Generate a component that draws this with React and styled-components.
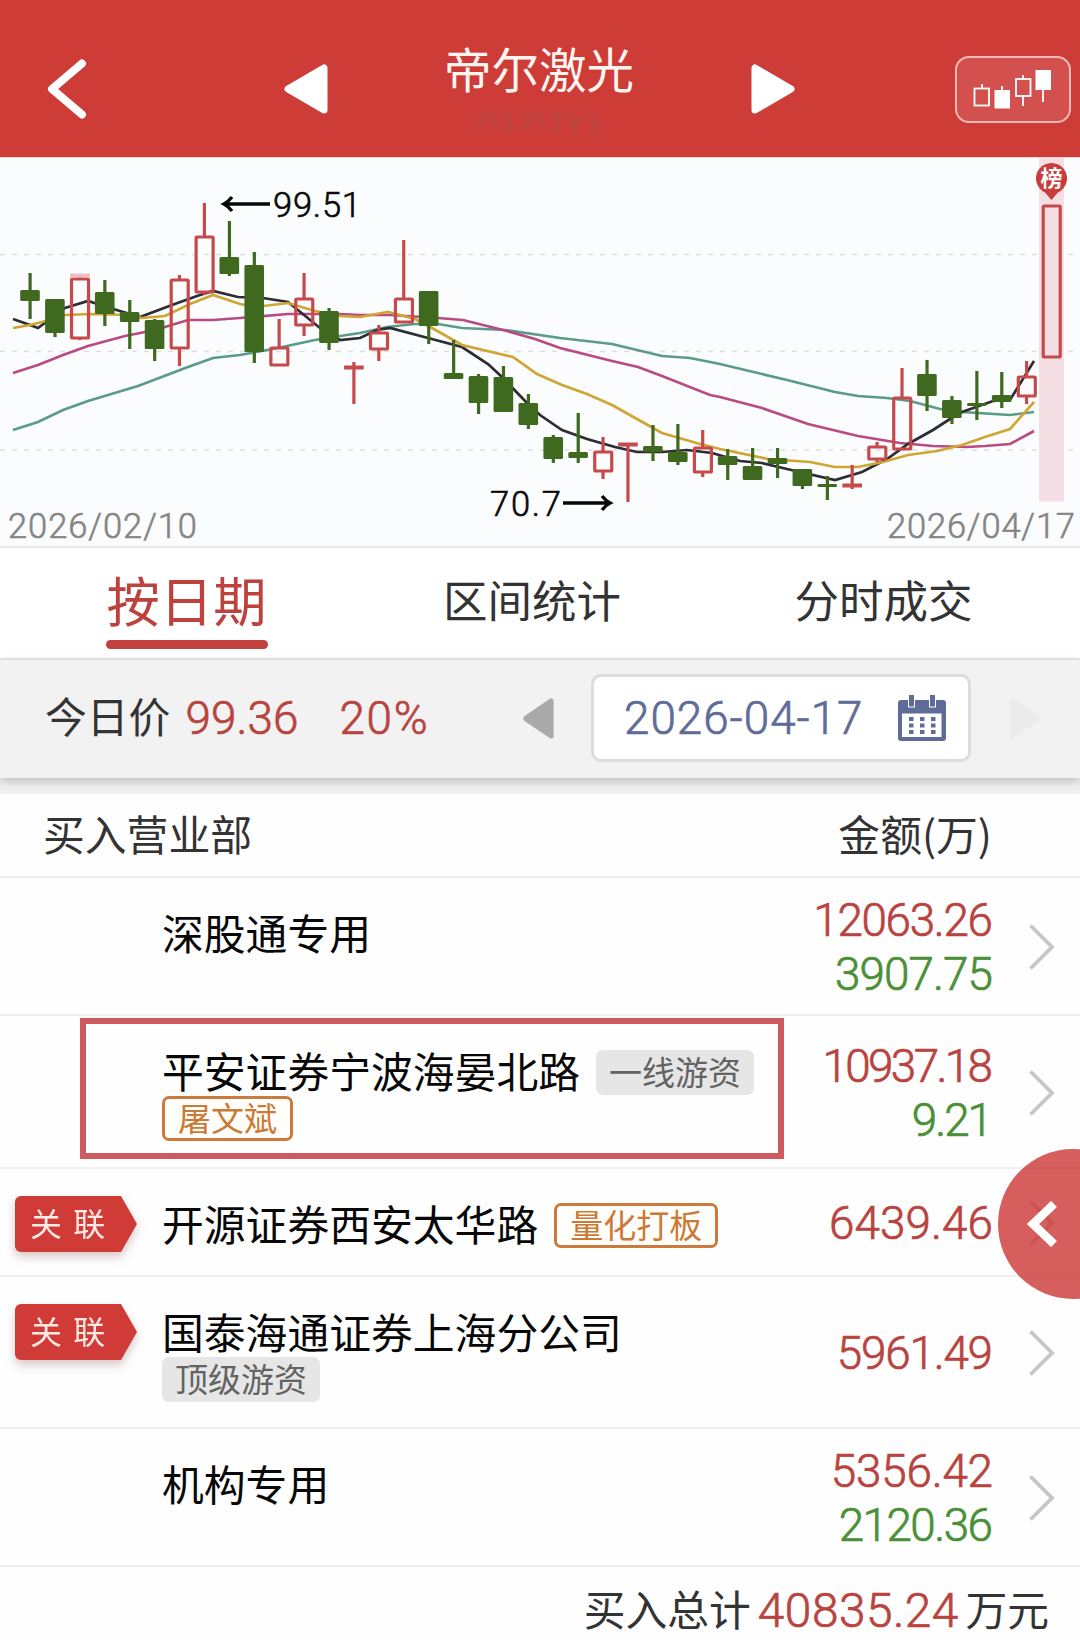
import React from 'react'
import styled, { createGlobalStyle } from 'styled-components'

const GlobalStyle = createGlobalStyle`
    body {
        margin: 0;
        background: #fff;
    }
    * {
        box-sizing: border-box;
    }
`

const Page = styled.div`
    position: relative;
    width: 1080px;
    height: 1640px;
    overflow: hidden;
    background: #fefefe;
    color: #333;
    font-family: 'Noto Sans CJK SC', sans-serif;
    font-size: 41.8px;
    svg {
        display: block;
        flex-shrink: 0;
    }
`

const Num = styled.span`
    font-family: Roboto, sans-serif;
    font-size: ${p => p.$size || 45.8}px;
    font-weight: 300;
    -webkit-text-stroke: 0.7px currentColor;
    letter-spacing: ${p => p.$track || -0.8}px;
    margin-right: ${p => -(p.$track || -0.8)}px;
    line-height: 54px;
    white-space: nowrap;
    color: ${p => p.$color || '#b9443f'};
`

/* top bar */

const Header = styled.header`
    display: flex;
    align-items: center;
    height: 157px;
    padding: 20px 9px 0 46px;
    background: #ce3c38;
    > .prev {
        margin-left: 197px;
    }
    > .next {
        margin-left: 115px;
    }
`

const TitleBlock = styled.div`
    display: flex;
    flex-direction: column;
    align-items: center;
    width: 192px;
    height: 136px;
    margin-left: 115px;
    margin-right: 1px;
    h1 {
        margin: 12px 0 0;
        font-size: 47.5px;
        font-weight: 400;
        line-height: 70px;
        white-space: nowrap;
        color: #fff5f0;
    }
    svg {
        margin-top: 2px;
    }
`

const KlineButton = styled.button`
    width: 116px;
    height: 67px;
    margin: 2px 0 0 auto;
    padding: 0;
    border: 2px solid #f0b9b5;
    border-radius: 14px;
    background: #d2504d;
`

/* k-line chart */

const ChartBox = styled.section`
    height: 391px;
    background: #fbfcfe;
    border-top: 1px solid #fbd3d0;
    border-bottom: 2px solid #e9eaec;
`

/* tabs */

const Tabs = styled.nav`
    display: grid;
    grid-template-columns: 349px 342px 361px;
    height: 112px;
    padding-left: 12px;
    background: #fff;
    border-bottom: 2px solid #e9e9e9;
`

const Tab = styled.div`
    display: flex;
    flex-direction: column;
    align-items: center;
    padding-top: 16px;
    font-size: ${p => (p.$active ? 53.3 : 44.5)}px;
    line-height: 70px;
    color: ${p => (p.$active ? '#bd423d' : '#333')};
    &::after {
        content: '';
        width: 162px;
        height: 9px;
        margin-top: 6px;
        border-radius: 5px;
        background: ${p => (p.$active ? '#c2403d' : 'transparent')};
    }
`

/* price and date */

const PriceBar = styled.section`
    position: relative;
    display: flex;
    align-items: center;
    height: 118px;
    padding: 0 0 2px 45px;
    background: #f2f2f2;
    box-shadow: 0 3px 9px rgba(0, 0, 0, 0.22);
    > span {
        line-height: 60px;
    }
    > span:first-child {
        padding-bottom: 6px;
    }
    .price {
        margin-left: 15px;
        padding-top: 2px;
    }
    .rate {
        margin-left: 41px;
        padding-top: 2px;
    }
    .prev {
        margin-left: auto;
    }
    .next {
        margin: 0 40px 0 38px;
    }
`

const DateBox = styled.div`
    display: flex;
    align-items: center;
    justify-content: space-between;
    width: 380px;
    height: 88px;
    margin-left: 37px;
    padding: 0 22px 0 30px;
    background: #fff;
    border: 3px solid #dcdcdc;
    border-radius: 10px;
    span {
        padding-top: 2px;
    }
`

const Gap = styled.div`
    height: 16px;
    background: #f0f0f0;
`

/* seats */

const ListHead = styled.div`
    display: flex;
    align-items: center;
    justify-content: space-between;
    height: 84px;
    padding: 0 88px 5px 43px;
    border-bottom: 2px solid #ededed;
`

const Row = styled.div`
    position: relative;
    display: flex;
    height: ${p => p.$h}px;
    border-bottom: 2px solid #efefef;
`

const BadgeCell = styled.div`
    width: 162px;
    padding: 27px 0 0 15px;
`

const Related = styled.div`
    filter: drop-shadow(0 5px 5px rgba(120, 60, 60, 0.28));
    span {
        display: block;
        width: 122px;
        height: 56px;
        padding-left: 15px;
        border-radius: 6px 0 0 6px;
        background: #d03a37;
        clip-path: polygon(0 0, 106px 0, 100% 50%, 106px 100%, 0 100%);
        font-size: 32px;
        line-height: 52px;
        word-spacing: 4px;
        white-space: pre;
        color: #ffe9e4;
    }
`

const Seat = styled.div`
    display: flex;
    flex-wrap: wrap;
    align-content: flex-start;
    column-gap: 16px;
    width: 620px;
    padding-top: 34px;
`

const SeatName = styled.span`
    height: 46px;
    line-height: 40px;
    white-space: nowrap;
    color: #080808;
`

const Tag = styled.span`
    height: 45px;
    padding: 0 13px;
    border: ${p => (p.$outline ? '3px solid #cc7a3e' : '0')};
    border-radius: 7px;
    background: ${p => (p.$outline ? '#fffefa' : '#e6e6e6')};
    font-size: 33px;
    line-height: ${p => (p.$outline ? 37 : 42)}px;
    white-space: nowrap;
    color: ${p => (p.$outline ? '#cb7a35' : '#636363')};
`

const Amounts = styled.div`
    display: flex;
    flex: 1;
    flex-direction: column;
    align-items: flex-end;
    justify-content: center;
    padding-top: 4px;
`

const ArrowCell = styled.div`
    display: flex;
    align-items: center;
    width: 87px;
    padding: 2px 0 0 36px;
`

// red frame drawn around one seat
const Frame = styled.div`
    position: absolute;
    left: 80px;
    top: 2px;
    width: 704px;
    height: 141px;
    border: 6px solid #cf5a60;
`

const Total = styled.footer`
    display: flex;
    align-items: center;
    justify-content: flex-end;
    gap: 7px;
    height: 82px;
    padding-right: 31px;
    line-height: 60px;
    ${Num} {
        padding-top: 5px;
    }
`

const FloatButton = styled.div`
    position: absolute;
    left: 998px;
    top: 1149px;
    display: flex;
    align-items: center;
    width: 150px;
    height: 150px;
    padding-left: 28px;
    border-radius: 50%;
    background: rgba(203, 52, 50, 0.79);
`

// [type, high, body top, body bottom, low], r = up, g = down
const candles = [
    ['g', 116, 133, 144, 162], ['g', 142, 142, 176, 180], ['r', 117, 121, 181, 183],
    ['g', 123, 135, 157, 169], ['g', 143, 155, 165, 192], ['g', 162, 163, 192, 204],
    ['r', 118, 122, 191, 209], ['r', 46, 79, 135, 138], ['g', 64, 100, 117, 119],
    ['g', 95, 108, 195, 206], ['r', 162, 190, 208, 209], ['r', 116, 141, 168, 179],
    ['g', 151, 154, 186, 193], ['r', 205, 209, 212, 247], ['r', 168, 175, 192, 204],
    ['r', 83, 141, 165, 165], ['g', 134, 134, 169, 187], ['g', 183, 216, 222, 222],
    ['g', 217, 219, 246, 257], ['g', 209, 220, 255, 255], ['g', 237, 246, 268, 272],
    ['g', 278, 280, 302, 306], ['g', 256, 295, 301, 306], ['r', 280, 294, 314, 322],
    ['r', 286, 286, 289, 345], ['g', 268, 289, 295, 304], ['g', 267, 295, 305, 308],
    ['r', 273, 290, 315, 320], ['g', 292, 299, 308, 323], ['g', 291, 309, 323, 323],
    ['g', 291, 301, 307, 321], ['g', 312, 312, 329, 332], ['g', 319, 327, 330, 343],
    ['r', 308, 327, 330, 332], ['r', 285, 289, 302, 305], ['r', 211, 240, 292, 292],
    ['g', 203, 217, 239, 254], ['g', 239, 243, 261, 267], ['g', 214, 246, 249, 263],
    ['g', 215, 238, 245, 251], ['r', 204, 219, 239, 247], ['r', 48, 48, 200, 200],
]

const averages = [
    {
        color: '#5b9b88',
        points: '13,273 38,265 63,253 88,244 138,229 188,210 213,201 240,198 262,194 287,189 315,183 340,179 360,176 387,170 415,167 438,167 462,171 505,173 560,181 612,187 662,199 690,201 720,207 762,217 787,223 835,235 858,239 887,241 910,244 940,252 962,255 1010,258 1034,255',
    },
    {
        color: '#b94a82',
        points: '13,216 38,208 63,198 88,189 125,179 145,175 165,170 188,163 213,163 240,161 288,157 340,157 360,158 390,158 438,161 463,163 503,173 535,182 560,191 612,204 638,210 662,219 710,238 720,240 762,251 808,267 858,279 900,286 933,289 967,290 985,289 1010,287 1034,274',
    },
    {
        color: '#2d2b33',
        points: '13,162 30,168 38,171 65,151 88,144 110,151 140,160 172,148 197,139 213,134 238,140 263,141 288,145 320,171 340,183 360,181 377,173 390,171 428,181 462,190 488,207 502,220 527,246 540,258 562,273 587,282 615,290 637,295 662,295 687,293 712,296 740,304 762,306 787,312 835,323 862,315 887,302 908,287 933,273 950,262 962,255 993,244 1010,243 1034,204',
    },
    {
        color: '#d0a632',
        points: '13,171 30,168 42,165 65,158 90,157 130,158 142,161 165,159 190,147 213,138 240,147 255,150 288,146 315,154 340,159 360,160 388,155 415,162 432,171 462,188 513,200 537,217 562,228 587,237 612,248 637,262 662,276 700,287 720,292 768,302 810,305 835,310 858,310 883,305 908,298 937,294 962,288 985,280 1010,272 1034,245',
    },
]

function Candle({ i, data }) {
    const [type, high, top, bottom, low] = data
    const x = 30 + i * 24.915
    if (type === 'g') {
        return (
            <g fill="#3f691e">
                <rect x={x - 1.5} y={high} width="3.2" height={low - high} />
                <rect x={x - 9.8} y={top} width="19.6" height={bottom - top} rx="1.5" />
            </g>
        )
    }
    const flat = bottom - top < 6
    return (
        <g stroke="#c6494b" strokeWidth="3.2" fill="none">
            <path d={`M${x} ${high}V${top}M${x} ${bottom}V${low}`} />
            {flat
                ? <path d={`M${x - 9.8} ${top + 1.5}H${x + 9.8}`} strokeWidth="4" />
                : <rect x={x - 8.3} y={top + 1} width="17" height={bottom - top - 1} rx="1" />}
        </g>
    )
}

const ChartText = styled.text`
    font-family: Roboto, sans-serif;
    font-size: 34.5px;
    font-weight: 300;
    fill: ${p => p.$color || '#080808'};
    stroke: ${p => p.$color || '#080808'};
    stroke-width: 0.6px;
`

function Chart() {
    return (
        <ChartBox>
            <svg width="1080" height="388" viewBox="0 1 1080 388">
                <g stroke="#dcdfe2" strokeWidth="1.6" strokeDasharray="5 7">
                    <path d="M0 97.5H1080" />
                    <path d="M0 194.5H1080" />
                    <path d="M0 293H1080" />
                </g>
                <rect x="1039" y="0" width="25" height="344.5" fill="#f5dfe4" />
                {averages.slice(0, 3).map(a => (
                    <polyline key={a.color} points={a.points} fill="none" stroke={a.color} strokeWidth="2.7" />
                ))}
                <polyline points={averages[3].points} fill="none" stroke={averages[3].color} strokeWidth="2.7" />
                {candles.map((c, i) => <Candle key={i} i={i} data={c} />)}
                <path d="M70 118.500H90" stroke="#ecc0c0" strokeWidth="4" />

                <path d="M270 47H224M232 40Q228 45 224 47Q228 49 232 54" fill="none" stroke="#080808" strokeWidth="3.4" />
                <ChartText x="273" y="60" textLength="88">99.51</ChartText>
                <path d="M563 346H610M602 339Q606 344 610 346Q606 348 602 353" fill="none" stroke="#080808" strokeWidth="3.4" />
                <ChartText x="490" y="359" textLength="71">70.7</ChartText>

                <ChartText x="8" y="381" $color="#858585" textLength="189">2026/02/10</ChartText>
                <ChartText x="887" y="381" $color="#858585" textLength="188">2026/04/17</ChartText>

                <path d="M1051.500 43L1045 35.500A15.500 15.500 0 1 1 1058 35.500Z" fill="#c83e3c" />
                <text x="1051.500" y="28.500" fill="#fff" textAnchor="middle" fontWeight="700" fontSize="22">榜</text>
            </svg>
        </ChartBox>
    )
}

// filled triangle with rounded corners, points left unless flipped
function Triangle({ w, h, color, flip, className }) {
    return (
        <svg className={className} width={w} height={h} viewBox="0 0 44 50" preserveAspectRatio="none">
            <path
                d="M4 25L40 4V46Z"
                fill={color}
                stroke={color}
                strokeWidth="7"
                strokeLinejoin="round"
                transform={flip ? 'matrix(-1 0 0 1 44 0)' : undefined}
            />
        </svg>
    )
}

function KlineIcon() {
    return (
        <svg width="112" height="63" viewBox="957 58 112 63">
            <g fill="none" stroke="#fff" strokeWidth="1.8">
                <rect x="974.500" y="88.500" width="14.500" height="17" />
                <path d="M982 84V88M1002 86V91M1023 75V79M1023 96V106M1043 90V102" />
                <rect x="1016" y="79" width="14.500" height="17" />
            </g>
            <rect x="994.500" y="90" width="15.500" height="18.500" fill="#fff" />
            <rect x="1035.500" y="70" width="15.500" height="20" fill="#fff" />
        </svg>
    )
}

function CalendarIcon() {
    return (
        <svg width="48" height="46" viewBox="0 0 48 46">
            <path d="M3 5H45Q48 5 48 8V43Q48 46 45 46H3Q0 46 0 43V8Q0 5 3 5Z" fill="#5f6c99" />
            <path d="M4 18.500H43.500V42H4Z" fill="#fff" />
            <path d="M10 0H17V12.500H10ZM31 0H38V12.500H31Z" fill="#fff" />
            <path d="M11 0H16V11.500H11ZM32 0H37V11.500H32Z" fill="#5f6c99" />
            <path
                d="M11 24H15.500M22 24H26.500M33 24H37.500M11 30.500H15.500M22 30.500H26.500M33 30.500H37.500M11 37H15.500M22 37H26.500M33 37H37.500"
                stroke="#5f6c99"
                strokeWidth="4"
            />
        </svg>
    )
}

function Chevron() {
    return (
        <svg width="27" height="46" viewBox="0 0 27 46">
            <path d="M1.500 1.500L23 23L1.500 44.500" fill="none" stroke="#c6c6c6" strokeWidth="3.8" />
        </svg>
    )
}

const seats = [
    { name: '深股通专用', buy: '12063.26', sell: '3907.75', h: 138, track: -1.3, sellTrack: -0.9 },
    {
        name: '平安证券宁波海晏北路',
        tags: [['一线游资'], ['屠文斌', true]],
        buy: '10937.18',
        sell: '9.21',
        h: 153,
        track: -2.6,
        sellTrack: -2,
        framed: true,
    },
    { name: '开源证券西安太华路', tags: [['量化打板', true]], buy: '6439.46', h: 108, related: true, track: 0.1 },
    { name: '国泰海通证券上海分公司', tags: [['顶级游资']], buy: '5961.49', h: 152, related: true, track: -1.2 },
    { name: '机构专用', buy: '5356.42', sell: '2120.36', h: 138, track: -0.2, sellTrack: -1.5 },
]

function SeatRow({ seat }) {
    return (
        <Row $h={seat.h}>
            <BadgeCell>
                {seat.related && <Related><span>关 联</span></Related>}
            </BadgeCell>
            <Seat>
                <SeatName>{seat.name}</SeatName>
                {(seat.tags || []).map(([text, outline]) => (
                    <Tag key={text} $outline={outline}>{text}</Tag>
                ))}
            </Seat>
            <Amounts>
                <Num $track={seat.track}>{seat.buy}</Num>
                {seat.sell && <Num $color="#4a9037" $track={seat.sellTrack}>{seat.sell}</Num>}
            </Amounts>
            <ArrowCell>
                <Chevron />
            </ArrowCell>
            {seat.framed && <Frame />}
        </Row>
    )
}

export default function App() {
    return (
        <Page>
            <GlobalStyle />
            <Header>
                <svg width="41" height="60" viewBox="0 0 41 60">
                    <path d="M36 4.500L6 30L36 55.500" fill="none" stroke="#fff" strokeWidth="8" strokeLinecap="round" strokeLinejoin="round" />
                </svg>
                <Triangle className="prev" w={44} h={50} color="#fff" />
                <TitleBlock>
                    <h1>帝尔激光</h1>
                    <svg width="130" height="32" viewBox="0 0 130 32">
                        <g stroke="#a8504a" strokeWidth="5" fill="none" opacity="0.45" style={{ filter: 'blur(2px)' }}>
                            <path d="M4 24L12 8M16 6L22 26M28 8L38 24M34 6V28M46 10H58L50 26M64 8L70 26M76 10H88M82 6V28M94 8L100 26L108 10M114 8L124 20L114 28" />
                        </g>
                    </svg>
                </TitleBlock>
                <Triangle className="next" w={44} h={50} color="#fff" flip />
                <KlineButton><KlineIcon /></KlineButton>
            </Header>

            <Chart />

            <Tabs>
                <Tab $active>按日期</Tab>
                <Tab>区间统计</Tab>
                <Tab>分时成交</Tab>
            </Tabs>

            <PriceBar>
                <span>今日价</span>
                <Num className="price" $track={0.1}>99.36</Num>
                <Num className="rate" $track={1.8}>20%</Num>
                <Triangle className="prev" w={31} h={41} color="#aaa" />
                <DateBox>
                    <Num $color="#5f6c99" $track={1}>2026-04-17</Num>
                    <CalendarIcon />
                </DateBox>
                <Triangle className="next" w={31} h={41} color="#ebebeb" flip />
            </PriceBar>
            <Gap />

            <ListHead>
                <span>买入营业部</span>
                <span>金额(万)</span>
            </ListHead>
            {seats.map(seat => <SeatRow key={seat.name} seat={seat} />)}
            <Total>
                <span>买入总计</span>
                <Num $size={47.8} $track={0.5}>40835.24</Num>
                <span>万元</span>
            </Total>

            <FloatButton>
                <svg width="32" height="46" viewBox="0 0 32 46">
                    <path d="M28 3L7 23L28 43" fill="none" stroke="#fff" strokeWidth="8.500" />
                </svg>
            </FloatButton>
        </Page>
    )
}
